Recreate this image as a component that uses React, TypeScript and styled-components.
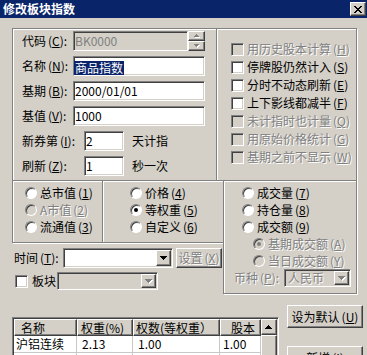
import React from 'react';
import styled, { createGlobalStyle, css } from 'styled-components';

const FACE = '#d4d0c8';
const SHADOW = '#808080';
const DARK = '#404040';
const GRID = '#c8c8c8';

const GlobalStyle = createGlobalStyle`
  html, body {
    margin: 0;
    padding: 0;
    background: ${FACE};
  }
  body {
    font-family: 'Noto Sans CJK SC', 'Noto Sans', sans-serif;
    font-size: 12px;
    line-height: 14px;
    color: #000;
  }
`;

const sunken = css`
  box-sizing: border-box;
  border: 1px solid;
  border-color: ${SHADOW} #fff #fff ${SHADOW};
  box-shadow: inset 1px 1px 0 ${DARK}, inset -1px -1px 0 ${FACE};
`;

const raised = css`
  box-sizing: border-box;
  border: 1px solid;
  border-color: #fff ${DARK} ${DARK} #fff;
  box-shadow: inset -1px -1px 0 ${SHADOW};
  background: ${FACE};
`;

const greyed = css`
  color: ${SHADOW};
  text-shadow: 1px 1px 0 #fff;
`;

const Window = styled.div`
  width: 367px;
  height: 355px;
  overflow: hidden;
  background: ${FACE};
  display: flex;
  flex-direction: column;
`;

const TitleBar = styled.div`
  flex: none;
  height: 18px;
  display: flex;
  align-items: center;
  justify-content: space-between;
  padding: 0 1px 0 3px;
  background: #0a246a;
  color: #fff;
  font-weight: bold;
  line-height: 18px;
`;

const CloseButton = styled.div`
  ${raised};
  width: 16px;
  height: 14px;
  display: flex;
  align-items: center;
  justify-content: center;
`;

const Content = styled.div`
  display: flex;
  flex-direction: column;
  padding: 10px 0 0 12px;
`;

const TopRow = styled.div`
  display: flex;
`;

const GroupBox = styled.div`
  box-sizing: border-box;
  flex: none;
  border: 1px solid ${SHADOW};
  box-shadow: inset 1px 1px 0 #fff, 1px 1px 0 #fff;
  display: flex;
  flex-direction: column;
`;

const MainGroup = styled(GroupBox)`
  width: 205px;
  height: 153px;
  padding: 2px 0 0 9px;
  gap: 5px;
`;

const OptionsGroup = styled(GroupBox)`
  width: 141px;
  height: 153px;
  margin-left: -1px;
  padding: 11px 0 0 14px;
`;

const FieldRow = styled.div`
  display: flex;
  align-items: center;
  height: 20px;
`;

const FieldLabel = styled.span<{ $w: number; $disabled?: boolean }>`
  flex: none;
  width: ${(p) => p.$w}px;
  white-space: nowrap;
  ${(p) => p.$disabled && greyed};
`;

const TextBox = styled.div<{ $w: number; $disabled?: boolean }>`
  ${sunken};
  flex: none;
  width: ${(p) => p.$w}px;
  height: 20px;
  padding-left: 1px;
  line-height: 18px;
  white-space: nowrap;
  overflow: hidden;
  background: ${(p) => (p.$disabled ? FACE : '#fff')};
  color: ${(p) => (p.$disabled ? SHADOW : '#000')};
`;

const Selection = styled.span`
  display: inline-block;
  margin-left: -1px;
  padding: 0 1px 0 1px;
  line-height: 14px;
  vertical-align: middle;
  background: #0a246a;
  color: #fff;
`;

const SpinBox = styled.div`
  flex: none;
  width: 17px;
  height: 20px;
  display: flex;
  flex-direction: column;
`;

const SpinButton = styled.div`
  ${raised};
  height: 10px;
  display: flex;
  align-items: center;
  justify-content: center;
`;

const Suffix = styled.span`
  margin-left: 8px;
  white-space: nowrap;
`;

const CheckRow = styled.div`
  display: flex;
  align-items: center;
  gap: 3px;
  height: 18px;
  white-space: nowrap;
`;

const CheckBox = styled.span<{ $disabled?: boolean }>`
  ${sunken};
  flex: none;
  width: 13px;
  height: 13px;
  background: ${(p) => (p.$disabled ? FACE : '#fff')};
`;

const ItemText = styled.span<{ $disabled?: boolean }>`
  white-space: nowrap;
  ${(p) => p.$disabled && greyed};
`;

const Mnemonic = styled.span`
  margin-left: 2px;
`;

const BottomRow = styled.div`
  display: flex;
  align-items: flex-start;
  margin-top: -1px;
`;

const LeftColumn = styled.div`
  flex: none;
  width: 212px;
  display: flex;
  flex-direction: column;
`;

const RadioPair = styled.div`
  display: flex;
`;

const RadioGroup = styled(GroupBox)<{ $w: number; $pl: number; $joined?: boolean }>`
  width: ${(p) => p.$w}px;
  height: 63px;
  margin-left: ${(p) => (p.$joined ? -1 : 0)}px;
  padding: 3px 0 0 ${(p) => p.$pl}px;
`;

const VolumeGroup = styled(GroupBox)`
  width: 134px;
  height: 114px;
  margin-left: -1px;
  padding: 3px 0 0 18px;
`;

const RadioRow = styled.div<{ $indent?: number }>`
  display: flex;
  align-items: center;
  gap: 3px;
  height: 17px;
  margin-left: ${(p) => p.$indent ?? 0}px;
`;

const RadioCircle = styled.span<{ $checked?: boolean; $disabled?: boolean }>`
  box-sizing: border-box;
  flex: none;
  width: 12px;
  height: 12px;
  border-radius: 50%;
  border: 1px solid;
  border-color: ${SHADOW} #fff #fff ${SHADOW};
  box-shadow: inset 1px 1px 0 ${DARK};
  background: ${(p) => (p.$disabled ? FACE : '#fff')};
  display: flex;
  align-items: center;
  justify-content: center;

  &::after {
    content: '';
    display: ${(p) => (p.$checked ? 'block' : 'none')};
    width: 4px;
    height: 4px;
    border-radius: 50%;
    background: ${(p) => (p.$disabled ? SHADOW : '#000')};
  }
`;

const CurrencyRow = styled.div`
  display: flex;
  align-items: center;
  height: 18px;
  margin-left: -8px;
`;

const Combo = styled.div<{ $w: number; $h: number; $disabled?: boolean }>`
  ${sunken};
  flex: none;
  width: ${(p) => p.$w}px;
  height: ${(p) => p.$h}px;
  padding: 1px;
  display: flex;
  align-items: center;
  background: ${(p) => (p.$disabled ? FACE : '#fff')};
`;

const ComboText = styled.span<{ $disabled?: boolean }>`
  flex: 1;
  padding-left: 2px;
  white-space: nowrap;
  line-height: 14px;
  ${(p) => p.$disabled && greyed};
`;

const DropButton = styled.span`
  ${raised};
  flex: none;
  width: 15px;
  align-self: stretch;
  display: flex;
  align-items: center;
  justify-content: center;
`;

const TimeRow = styled.div`
  display: flex;
  align-items: center;
  height: 20px;
  margin-top: 5px;
  padding-left: 2px;
`;

const SmallButton = styled.div<{ $disabled?: boolean }>`
  ${raised};
  flex: none;
  width: 46px;
  height: 20px;
  margin-left: 3px;
  display: flex;
  align-items: center;
  justify-content: center;
  white-space: nowrap;
  ${(p) => p.$disabled && greyed};
`;

const BlockRow = styled.div`
  display: flex;
  align-items: center;
  height: 18px;
  margin-top: 4px;
  padding-left: 3px;

  & > ${ItemText} {
    margin: 0 1px 0 4px;
  }
`;

const LowerRow = styled.div`
  display: flex;
  align-items: flex-start;
`;

const ListView = styled.div`
  ${sunken};
  flex: none;
  width: 267px;
  height: 70px;
  margin-top: 23px;
  padding: 1px;
  display: flex;
  background: #fff;
`;

const ListGrid = styled.div`
  flex: none;
  width: 247px;
  display: grid;
  grid-template-columns: 63px 56px 87px 41px;
  grid-auto-rows: 17px;
  align-content: start;
`;

const HeaderCell = styled.div<{ $indent: number }>`
  ${raised};
  padding-left: ${(p) => p.$indent}px;
  line-height: 15px;
  white-space: nowrap;
  overflow: hidden;
`;

const DataCell = styled.div<{ $indent: number }>`
  box-sizing: border-box;
  border-right: 1px solid ${GRID};
  border-bottom: 1px solid ${GRID};
  padding-left: ${(p) => p.$indent}px;
  line-height: 16px;
  white-space: nowrap;
  overflow: hidden;
`;

const ScrollBar = styled.div`
  flex: none;
  width: 16px;
  display: flex;
  flex-direction: column;
`;

const ScrollArrow = styled.div`
  ${raised};
  flex: none;
  height: 16px;
  display: flex;
  align-items: center;
  justify-content: center;
`;

const ScrollThumb = styled.div`
  ${raised};
  flex: 1;
`;

const ButtonColumn = styled.div`
  display: flex;
  flex-direction: column;
  gap: 18px;
  margin: 11px 0 0 8px;
`;

const PushButton = styled.div`
  ${raised};
  width: 76px;
  height: 23px;
  display: flex;
  align-items: center;
  justify-content: center;
  white-space: nowrap;
`;

const ARROWS = {
  down: 'M0 0h7v1H0zM1 1h5v1H1zM2 2h3v1H2zM3 3h1v1H3z',
  up: 'M3 0h1v1H3zM2 1h3v1H2zM1 2h5v1H1zM0 3h7v1H0z',
  smallUp: 'M2 0h1v1H2zM1 1h3v1H1zM0 2h5v1H0z',
  smallDown: 'M0 0h5v1H0zM1 1h3v1H1zM2 2h1v1H2z',
};

const Arrow = ({ kind, disabled }: { kind: keyof typeof ARROWS; disabled?: boolean }) => {
  const small = kind.startsWith('small');
  const w = small ? 6 : 8;
  const h = small ? 4 : 5;
  return (
    <svg width={w} height={h} viewBox={`0 0 ${w} ${h}`} shapeRendering="crispEdges">
      {disabled && <path d={ARROWS[kind]} fill="#fff" transform="translate(1 1)" />}
      <path d={ARROWS[kind]} fill={disabled ? SHADOW : '#000'} />
    </svg>
  );
};

const CloseGlyph = () => (
  <svg width="8" height="7" viewBox="0 0 8 7" shapeRendering="crispEdges">
    <path
      d="M0 0h2v1H0zM6 0h2v1H6zM1 1h2v1H1zM5 1h2v1H5zM2 2h4v1H2zM3 3h2v1H3zM2 4h4v1H2zM1 5h2v1H1zM5 5h2v1H5zM0 6h2v1H0zM6 6h2v1H6z"
      fill="#000"
    />
  </svg>
);

const Hot = ({ k }: { k: string }) => (
  <Mnemonic>
    (<u>{k}</u>)
  </Mnemonic>
);

const options = [
  { text: '用历史股本计算', key: 'H', disabled: true },
  { text: '停牌股仍然计入', key: 'S' },
  { text: '分时不动态刷新', key: 'E' },
  { text: '上下影线都减半', key: 'F' },
  { text: '未计指时也计量', key: 'Q', disabled: true },
  { text: '用原始价格统计', key: 'G', disabled: true },
  { text: '基期之前不显示', key: 'W', disabled: true },
];

type RadioItem = { text: string; key: string; checked?: boolean; disabled?: boolean; indent?: number };

const weightModes: RadioItem[] = [
  { text: '总市值', key: '1' },
  { text: 'A市值', key: '2', disabled: true },
  { text: '流通值', key: '3' },
];

const priceModes: RadioItem[] = [
  { text: '价格', key: '4' },
  { text: '等权重', key: '5', checked: true },
  { text: '自定义', key: '6' },
];

const volumeModes: RadioItem[] = [
  { text: '成交量', key: '7' },
  { text: '持仓量', key: '8' },
  { text: '成交额', key: '9' },
  { text: '基期成交额', key: 'A', checked: true, disabled: true, indent: 11 },
  { text: '当日成交额', key: 'Y', disabled: true, indent: 11 },
];

const columns = [
  { title: '名称', head: 6, cell: 2 },
  { title: '权重(%)', head: 3, cell: 5 },
  { title: '权数(等权重）', head: 2, cell: 5 },
  { title: '股本', head: 10, cell: 3 },
];

const rows = [
  ['沪铝连续', '2.13', '1.00', '1.00'],
  ['沪铜连续', '2.13', '1.00', '1.00'],
];

const Radios = ({ items }: { items: RadioItem[] }) => (
  <>
    {items.map((r) => (
      <RadioRow key={r.key} $indent={r.indent}>
        <RadioCircle $checked={r.checked} $disabled={r.disabled} />
        <ItemText $disabled={r.disabled}>
          {r.text}
          <Hot k={r.key} />
        </ItemText>
      </RadioRow>
    ))}
  </>
);

const App = () => (
  <Window>
    <GlobalStyle />
    <TitleBar>
      <span>修改板块指数</span>
      <CloseButton>
        <CloseGlyph />
      </CloseButton>
    </TitleBar>
    <Content>
      <TopRow>
        <MainGroup>
          <FieldRow>
            <FieldLabel $w={51}>代码<Hot k="C" />:</FieldLabel>
            <TextBox $w={115} $disabled>BK0000</TextBox>
            <SpinBox>
              <SpinButton>
                <Arrow kind="smallUp" disabled />
              </SpinButton>
              <SpinButton>
                <Arrow kind="smallDown" disabled />
              </SpinButton>
            </SpinBox>
          </FieldRow>
          <FieldRow>
            <FieldLabel $w={51}>名称<Hot k="N" />:</FieldLabel>
            <TextBox $w={132}>
              <Selection>商品指数</Selection>
            </TextBox>
          </FieldRow>
          <FieldRow>
            <FieldLabel $w={51}>基期<Hot k="B" />:</FieldLabel>
            <TextBox $w={132}>2000/01/01</TextBox>
          </FieldRow>
          <FieldRow>
            <FieldLabel $w={51}>基值<Hot k="V" />:</FieldLabel>
            <TextBox $w={132}>1000</TextBox>
          </FieldRow>
          <FieldRow>
            <FieldLabel $w={62}>新券第<Hot k="I" />:</FieldLabel>
            <TextBox $w={40}>2</TextBox>
            <Suffix>天计指</Suffix>
          </FieldRow>
          <FieldRow>
            <FieldLabel $w={62}>刷新<Hot k="Z" />:</FieldLabel>
            <TextBox $w={40}>1</TextBox>
            <Suffix>秒一次</Suffix>
          </FieldRow>
        </MainGroup>
        <OptionsGroup>
          {options.map((o) => (
            <CheckRow key={o.key}>
              <CheckBox $disabled={o.disabled} />
              <ItemText $disabled={o.disabled}>
                {o.text}
                <Hot k={o.key} />
              </ItemText>
            </CheckRow>
          ))}
        </OptionsGroup>
      </TopRow>
      <BottomRow>
        <LeftColumn>
          <RadioPair>
            <RadioGroup $w={91} $pl={12}>
              <Radios items={weightModes} />
            </RadioGroup>
            <RadioGroup $w={122} $pl={27} $joined>
              <Radios items={priceModes} />
            </RadioGroup>
          </RadioPair>
          <TimeRow>
            <FieldLabel $w={49}>时间<Hot k="T" />:</FieldLabel>
            <Combo $w={110} $h={20}>
              <ComboText />
              <DropButton>
                <Arrow kind="down" />
              </DropButton>
            </Combo>
            <SmallButton $disabled>
              设置<Hot k="X" />
            </SmallButton>
          </TimeRow>
          <BlockRow>
            <CheckBox />
            <ItemText>板块</ItemText>
            <Combo $w={101} $h={18} $disabled>
              <ComboText />
              <DropButton>
                <Arrow kind="down" disabled />
              </DropButton>
            </Combo>
          </BlockRow>
        </LeftColumn>
        <VolumeGroup>
          <Radios items={volumeModes} />
          <CurrencyRow>
            <FieldLabel $w={50} $disabled>币种<Hot k="P" />:</FieldLabel>
            <Combo $w={67} $h={18} $disabled>
              <ComboText $disabled>人民币</ComboText>
              <DropButton>
                <Arrow kind="down" disabled />
              </DropButton>
            </Combo>
          </CurrencyRow>
        </VolumeGroup>
      </BottomRow>
      <LowerRow>
        <ListView>
          <ListGrid>
            {columns.map((c) => (
              <HeaderCell key={c.title} $indent={c.head}>
                {c.title}
              </HeaderCell>
            ))}
            {rows.map((r, i) =>
              r.map((v, j) => (
                <DataCell key={`${i}-${j}`} $indent={columns[j].cell}>
                  {v}
                </DataCell>
              )),
            )}
          </ListGrid>
          <ScrollBar>
            <ScrollArrow>
              <Arrow kind="up" />
            </ScrollArrow>
            <ScrollThumb />
          </ScrollBar>
        </ListView>
        <ButtonColumn>
          <PushButton>
            设为默认<Hot k="U" />
          </PushButton>
          <PushButton>
            新增<Hot k="I" />
          </PushButton>
        </ButtonColumn>
      </LowerRow>
    </Content>
  </Window>
);

export default App;
